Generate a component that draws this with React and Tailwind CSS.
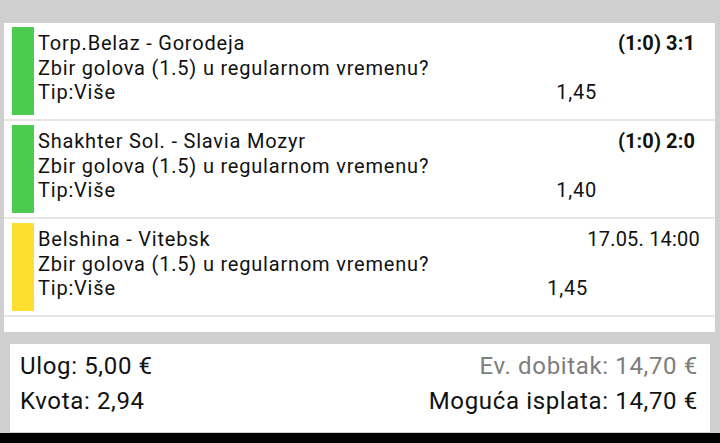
const tickets = [
  {
    id: 1,
    match: "Torp.Belaz - Gorodeja",
    market: "Zbir golova (1.5) u regularnom vremenu?",
    tip: "Tip:Više",
    odd: "1,45",
    right: "(1:0) 3:1",
    bold: true,
    bar: "bg-[#4dcb51]",
  },
  {
    id: 2,
    match: "Shakhter Sol. - Slavia Mozyr",
    market: "Zbir golova (1.5) u regularnom vremenu?",
    tip: "Tip:Više",
    odd: "1,40",
    right: "(1:0) 2:0",
    bold: true,
    bar: "bg-[#4dcb51]",
  },
  {
    id: 3,
    match: "Belshina - Vitebsk",
    market: "Zbir golova (1.5) u regularnom vremenu?",
    tip: "Tip:Više",
    odd: "1,45",
    right: "17.05. 14:00",
    bold: false,
    bar: "bg-[#fddf32]",
  },
];

const TicketRow = ({ t }) => (
  <div className="flex items-start border-b-2 border-[#e6e6e6]">
    <div className={`${t.bar} w-[22px] h-[88px] ml-[8px] mt-[4px] mb-[4px] shrink-0`}></div>
    <div className={`flex-1 ml-[4px] pt-[8px] text-[20px] leading-[24.5px] tracking-[0.8px] text-[#111] ${t.bold ? "pr-[20px]" : "pr-[15px]"}`}>
      <div className="flex justify-between">
        <span>{t.match}</span>
        <span className={t.bold ? "font-bold tracking-[0.1px]" : "tracking-[0.2px]"}>{t.right}</span>
      </div>
      <div>{t.market}</div>
      <div className="flex">
        <span className="flex-1">{t.tip}</span>
        <span className={t.bold ? "mr-[98px]" : "mr-[112px]"}>{t.odd}</span>
      </div>
    </div>
  </div>
);

const App = () => {
  return (
    <div
      className="w-[720px] h-[443px] bg-[#cfcfcf] flex flex-col overflow-hidden"
      style={{ fontFamily: "Roboto, 'Liberation Sans', sans-serif" }}
    >
      {/* tickets */}
      <div className="mt-[23px] ml-[4px] mr-[5px] h-[309px] bg-white">
        {tickets.map((t) => (
          <TicketRow key={t.id} t={t} />
        ))}
      </div>

      {/* summary */}
      <div className="mt-[12px] mx-[10px] h-[88px] bg-white pl-[10px] pr-[12px] pt-[5px] text-[24px] leading-[35px] tracking-[0.65px] text-[#111]">
        <div className="flex justify-between">
          <span>Ulog: 5,00 €</span>
          <span className="text-[#7d7d7d]">Ev. dobitak: 14,70 €</span>
        </div>
        <div className="flex justify-between">
          <span>Kvota: 2,94</span>
          <span>Moguća isplata: 14,70 €</span>
        </div>
      </div>

      <div className="mt-[1px] h-[10px] bg-black"></div>
    </div>
  );
};

export default App;
